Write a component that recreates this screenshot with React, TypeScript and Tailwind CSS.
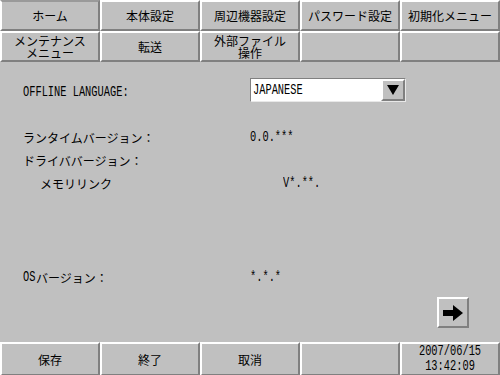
import type { ReactNode } from "react";

const jp = "font-['Noto_Sans_CJK_JP',sans-serif] text-[12px] leading-[13px] text-black";

const Mono = ({ children, className = "" }: { children: ReactNode; className?: string }) => (
  <span
    className={`inline-block whitespace-nowrap font-['Liberation_Mono',monospace] text-[15px] leading-[15px] text-black scale-x-[0.69] ${className}`}
  >
    {children}
  </span>
);

const Cell = ({ children, pressed = false }: { children?: ReactNode; pressed?: boolean }) => (
  <div
    className={`flex items-center justify-center text-center border-2 border-l-white border-b-[#808080] border-r-[#808080] ${
      pressed ? "border-t-[#9a9a9a]" : "border-t-white"
    } ${jp}`}
  >
    {children}
  </div>
);

export default function App() {
  return (
    <div className="w-[500px] h-[375px] bg-[#c0c0c0] flex flex-col overflow-hidden select-none">
      {/* tab rows */}
      <div className="grid grid-cols-5 grid-rows-[31px_31px]">
        <Cell pressed>ホーム</Cell>
        <Cell>本体設定</Cell>
        <Cell>周辺機器設定</Cell>
        <Cell>パスワード設定</Cell>
        <Cell>初期化メニュー</Cell>
        <Cell>
          <div className="flex flex-col leading-[12px]">
            <span>メンテナンス</span>
            <span>メニュー</span>
          </div>
        </Cell>
        <Cell>転送</Cell>
        <Cell>
          <div className="flex flex-col leading-[12px]">
            <span>外部ファイル</span>
            <span>操作</span>
          </div>
        </Cell>
        <Cell />
        <Cell />
      </div>

      {/* content */}
      <div className="flex-1 flex flex-col">
        <div className="flex items-center h-6 mt-4 pl-[23px]">
          <div className="w-[227px]">
            <Mono className="origin-left">OFFLINE LANGUAGE:</Mono>
          </div>
          <div className="w-[156px] h-6 flex bg-white border border-t-[#808080] border-l-[#808080] border-b-[#e8e8e8] border-r-[#e8e8e8]">
            <div className="flex-1 flex items-center pl-[2px] overflow-hidden">
              <Mono className="origin-left">JAPANESE</Mono>
            </div>
            <div className="w-6 bg-[#c0c0c0] flex items-center justify-center border-2 border-t-white border-l-white border-b-[#808080] border-r-[#808080]">
              <svg width="12" height="10" viewBox="0 0 12 10">
                <polygon points="0,0 12,0 6,10" fill="#000" />
              </svg>
            </div>
          </div>
        </div>

        <div className="flex items-center h-[23px] mt-6 pl-[23px]">
          <div className={`w-[227px] ${jp}`}>ランタイムバージョン：</div>
          <Mono className="origin-left">0.0.***</Mono>
        </div>
        <div className="flex items-center h-[23px] pl-[23px]">
          <div className={`w-[227px] ${jp}`}>ドライババージョン：</div>
        </div>
        <div className="flex items-center h-[23px] pl-[40px]">
          <div className={`w-[243px] ${jp}`}>メモリリンク</div>
          <Mono className="origin-left">V*.**.</Mono>
        </div>

        <div className="flex items-center h-[23px] mt-[71px] pl-[23px]">
          <div className={`w-[227px] flex items-center ${jp}`}>
            <Mono className="origin-left w-[13px]">OS</Mono>
            <span>バージョン：</span>
          </div>
          <Mono className="origin-left">*.*.*</Mono>
        </div>

        <div className="flex justify-end mt-2 pr-[31px]">
          <div className="w-8 h-[31px] flex items-center justify-center border-2 border-t-white border-l-white border-b-[#808080] border-r-[#808080]">
            <svg width="20" height="16" viewBox="0 0 20 16">
              <path d="M0 5 H10 V0 L20 8 L10 16 V11 H0 Z" fill="#000" />
            </svg>
          </div>
        </div>
      </div>

      {/* bottom bar */}
      <div className="grid grid-cols-5 h-[33px]">
        <Cell>保存</Cell>
        <Cell>終了</Cell>
        <Cell>取消</Cell>
        <Cell />
        <Cell>
          <div className="flex flex-col items-center">
            <Mono className="origin-center leading-[13px]">2007/06/15</Mono>
            <Mono className="origin-center leading-[13px]">13:42:09</Mono>
          </div>
        </Cell>
      </div>
    </div>
  );
}
